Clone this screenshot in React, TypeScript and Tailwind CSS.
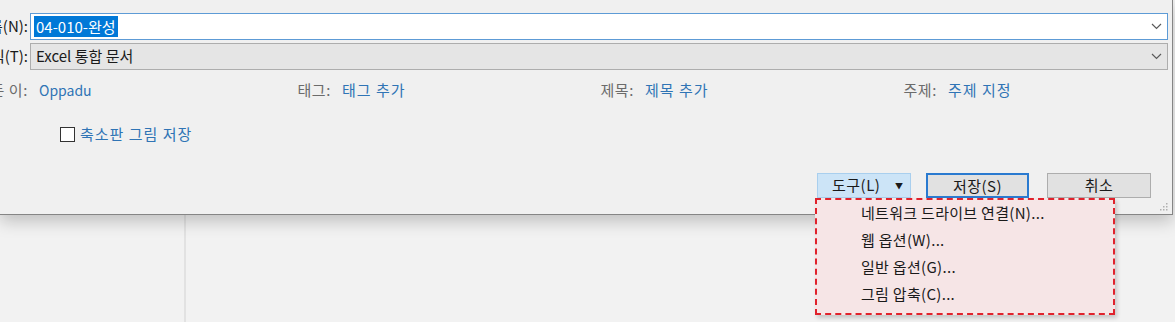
const menuItems = ["네트워크 드라이브 연결(N)...", "웹 옵션(W)...", "일반 옵션(G)...", "그림 압축(C)..."];

const props = [
  { label: "만든 이:", value: "Oppadu" },
  { label: "태그:", value: "태그 추가" },
  { label: "제목:", value: "제목 추가" },
  { label: "주제:", value: "주제 지정" },
];

const Label = ({ text }: { text: string }) => (
  <div className="w-[28px] shrink-0 flex justify-end whitespace-nowrap text-[#1a1a1a]">{text}</div>
);

const Chevron = () => (
  <svg width="11" height="7" viewBox="0 0 11 7" className="shrink-0">
    <polyline points="1,1 5.5,5.5 10,1" fill="none" stroke="#5a5a5a" strokeWidth="1.2" />
  </svg>
);

export default function App() {
  return (
    <div className="relative w-[1175px] h-[322px] overflow-hidden bg-[#f2f2f2] text-[15px] font-['Noto_Sans_CJK_KR','Noto_Sans',sans-serif]">
      {/* Dialog */}
      <div className="relative z-10 w-[1173px] h-[215px] bg-[#f0f0f0] border-r border-b border-[#858585] shadow-[0_6px_16px_rgba(0,0,0,0.22)] pt-[13px] pr-[4px]">
        {/* file name */}
        <div className="flex items-center gap-[2px] h-[27px]">
          <Label text="파일 이름(N):" />
          <div className="flex-1 h-full flex items-center justify-between bg-white border border-[#5d9bd6] pl-[3px] pr-[5px]">
            <span className="bg-[#0078d7] text-white px-[2px] leading-[21px]">04-010-완성</span>
            <Chevron />
          </div>
        </div>
        {/* file type */}
        <div className="flex items-center gap-[2px] h-[27px] mt-[3px]">
          <Label text="파일 형식(T):" />
          <div className="flex-1 h-full flex items-center justify-between bg-[#e5e5e5] border border-[#adadad] pl-[5px] pr-[5px] text-[#1a1a1a]">
            <span>Excel 통합 문서</span>
            <Chevron />
          </div>
        </div>
        {/* properties */}
        <div className="flex items-center h-[20px] mt-[10px]">
          {props.map((p, i) => (
            <div key={p.label} className="w-[303px] shrink-0 flex items-center gap-[11px]">
              <div className="w-[28px] shrink-0 flex justify-end whitespace-nowrap text-[#6b6b6b] tracking-[0.6px]">{p.label}</div>
              <span className={i === 0 ? "text-[#2f74b5] text-[14px]" : "text-[#2f74b5] tracking-[1px]"}>{p.value}</span>
            </div>
          ))}
        </div>
        {/* thumbnail */}
        <div className="flex items-center gap-[5px] ml-[60px] mt-[24px] h-[20px]">
          <div className="w-[15px] h-[15px] border-[1.5px] border-[#333] bg-white" />
          <span className="text-[#2f74b5] tracking-[1px]">축소판 그림 저장</span>
        </div>
        {/* buttons */}
        <div className="flex justify-end items-center mt-[29px] mr-[17px]">
          <div className="relative">
            <button className="w-[94px] h-[25px] flex items-center bg-[#cce4f7] border border-[#a9cfee] pl-[14px] pr-[7px] text-[#1a1a1a]">
              <span className="tracking-[0.5px]">도구(L)</span>
              <span className="ml-auto text-[8px]">▼</span>
            </button>
            {/* dropdown */}
            <div className="absolute left-[-2px] top-[25px] w-[300px] h-[117px] bg-[#f6e5e6] border-2 border-dashed border-[#e0222c] shadow-[2px_3px_4px_rgba(0,0,0,0.18)] pl-[44px] text-[#1a1a1a] tracking-[0.3px]">
              {menuItems.map((m) => (
                <div key={m} className="h-[27px] flex items-center whitespace-nowrap">{m}</div>
              ))}
            </div>
          </div>
          <button className="ml-[15px] w-[103px] h-[25px] bg-[#e1e1e1] border-2 border-[#2a7ad0] text-[#1a1a1a] tracking-[0.5px]">저장(S)</button>
          <button className="ml-[18px] w-[104px] h-[25px] bg-[#e1e1e1] border border-[#adadad] text-[#1a1a1a] tracking-[0.5px]">취소</button>
        </div>
        {/* resize grip */}
        <svg width="10" height="10" viewBox="0 0 10 10" className="absolute right-[4px] bottom-[3px]">
          {[[8, 2], [8, 5], [5, 5], [8, 8], [5, 8], [2, 8]].map(([x, y]) => (
            <rect key={`${x}-${y}`} x={x} y={y} width="1.5" height="1.5" fill="#b0b0b0" />
          ))}
        </svg>
      </div>
      {/* Window behind */}
      <div className="flex h-[107px]">
        <div className="w-[186px] border-r-2 border-[#e2e2e2] bg-[#f2f2f2]" />
        <div className="flex-1 bg-[#f2f2f2]" />
      </div>
    </div>
  );
}
